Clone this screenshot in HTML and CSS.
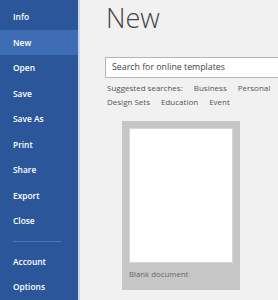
FILE: index.html
```html
<!DOCTYPE html>
<html lang="en">
  <head>
    <meta charset="UTF-8" />
    <title>New</title>
    <link rel="stylesheet" href="styles.css">
  </head>
  <body>
    <div class="backstage">
      <nav class="side-nav">
        <div class="nav-item">Info</div>
        <div class="nav-item active">New</div>
        <div class="nav-item">Open</div>
        <div class="nav-item">Save</div>
        <div class="nav-item">Save As</div>
        <div class="nav-item">Print</div>
        <div class="nav-item">Share</div>
        <div class="nav-item">Export</div>
        <div class="nav-item">Close</div>
        <div class="nav-sep"></div>
        <div class="nav-item">Account</div>
        <div class="nav-item">Options</div>
      </nav>
      <div class="main-body">
        <h1 class="main-title">New</h1>
        <div class="search-box">Search for online templates</div>
        <div class="suggested">
          <div class="suggested-row">
            <span>Suggested searches:</span>
            <span>Business</span>
            <span>Personal</span>
          </div>
          <div class="suggested-row">
            <span>Design Sets</span>
            <span>Education</span>
            <span>Event</span>
          </div>
        </div>
        <div class="template-card">
          <div class="template-page"></div>
          <div class="template-name">Blank document</div>
        </div>
      </div>
    </div>
  </body>
</html>
```

FILE: styles.css
```css
html,
body {
  margin: 0;
  height: 100%;
  overflow: hidden;
}
body {
  font-family: "Open Sans", "Liberation Sans", sans-serif;
  background-color: #f1f1f1;
}
.backstage {
  display: flex;
  height: 300px;
  overflow: hidden;
}
.side-nav {
  width: 78px;
  flex-shrink: 0;
  padding-top: 4px;
  background-color: #2b579a;
  border-right: 2px solid #c9d8ee;
}
.nav-item {
  height: 25.5px;
  line-height: 25.5px;
  padding-left: 13px;
  font-size: 8.4px;
  font-weight: 600;
  color: #fff;
}
.nav-item.active {
  background-color: #3e6db5;
}
.nav-sep {
  height: 1px;
  margin: 7px 17px 7px 13px;
  background-color: #4f76b2;
}
.main-body {
  flex: 1;
  padding-left: 25px;
  color: #444;
  min-width: 0;
}
.main-title {
  margin: 0;
  padding-left: 1px;
  height: 57px;
  font-size: 27px;
  font-weight: 300;
  line-height: 36px;
  color: #444;
}
.search-box {
  height: 19px;
  line-height: 19px;
  margin-right: -20px;
  padding-left: 6px;
  border: 1px solid #b5b5b5;
  background-color: #fff;
  font-size: 8.8px;
  color: #444;
}
.suggested {
  padding: 3px 0 0 2px;
  font-size: 8px;
  line-height: 14px;
  color: #555;
}
.suggested-row {
  display: flex;
  column-gap: 11px;
  white-space: nowrap;
}
.template-card {
  width: 118px;
  height: 169px;
  margin: 12px 0 0 17px;
  padding: 7px 0 0 7px;
  box-sizing: border-box;
  background-color: #c6c6c6;
}
.template-page {
  width: 104px;
  height: 135px;
  background-color: #fff;
  border: 1px solid #d8d8d8;
  box-sizing: border-box;
}
.template-name {
  padding-top: 6px;
  font-size: 7.8px;
  color: #666;
}
```
